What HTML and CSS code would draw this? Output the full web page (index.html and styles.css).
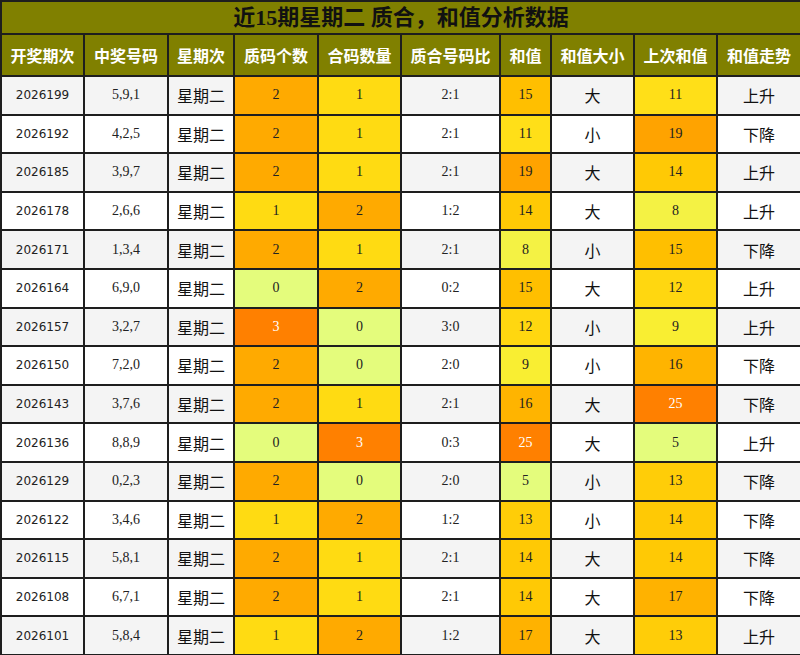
FILE: index.html
```html
<!DOCTYPE html>
<html lang="zh-CN">
<head>
<meta charset="utf-8">
<title>近15期星期二 质合，和值分析数据</title>
<link rel="stylesheet" href="styles.css">
</head>
<body>
<table class="grid">
  <colgroup>
    <col class="w83"><col class="w84"><col class="w66"><col class="w84"><col class="w83">
    <col class="w99"><col class="w51"><col class="w83"><col class="w83"><col class="w84">
  </colgroup>
  <thead>
    <tr class="title-row"><th colspan="10" class="title">近15期星期二 质合，和值分析数据</th></tr>
    <tr class="head-row">
      <th>开奖期次</th><th>中奖号码</th><th>星期次</th><th>质码个数</th><th>合码数量</th>
      <th>质合号码比</th><th>和值</th><th>和值大小</th><th>上次和值</th><th>和值走势</th>
    </tr>
  </thead>
  <tbody>
    <tr class="odd"><td class="period">2026199</td><td class="num">5,9,1</td><td class="cn">星期二</td><td class="num q2">2</td><td class="num q1">1</td><td class="num">2:1</td><td class="num s15">15</td><td class="cn">大</td><td class="num s11">11</td><td class="cn">上升</td></tr>
    <tr><td class="period">2026192</td><td class="num">4,2,5</td><td class="cn">星期二</td><td class="num q2">2</td><td class="num q1">1</td><td class="num">2:1</td><td class="num s11">11</td><td class="cn">小</td><td class="num s19">19</td><td class="cn">下降</td></tr>
    <tr class="odd"><td class="period">2026185</td><td class="num">3,9,7</td><td class="cn">星期二</td><td class="num q2">2</td><td class="num q1">1</td><td class="num">2:1</td><td class="num s19">19</td><td class="cn">大</td><td class="num s14">14</td><td class="cn">上升</td></tr>
    <tr><td class="period">2026178</td><td class="num">2,6,6</td><td class="cn">星期二</td><td class="num q1">1</td><td class="num q2">2</td><td class="num">1:2</td><td class="num s14">14</td><td class="cn">大</td><td class="num s8">8</td><td class="cn">上升</td></tr>
    <tr class="odd"><td class="period">2026171</td><td class="num">1,3,4</td><td class="cn">星期二</td><td class="num q2">2</td><td class="num q1">1</td><td class="num">2:1</td><td class="num s8">8</td><td class="cn">小</td><td class="num s15">15</td><td class="cn">下降</td></tr>
    <tr><td class="period">2026164</td><td class="num">6,9,0</td><td class="cn">星期二</td><td class="num q0">0</td><td class="num q2">2</td><td class="num">0:2</td><td class="num s15">15</td><td class="cn">大</td><td class="num s12">12</td><td class="cn">上升</td></tr>
    <tr class="odd"><td class="period">2026157</td><td class="num">3,2,7</td><td class="cn">星期二</td><td class="num q3">3</td><td class="num q0">0</td><td class="num">3:0</td><td class="num s12">12</td><td class="cn">小</td><td class="num s9">9</td><td class="cn">上升</td></tr>
    <tr><td class="period">2026150</td><td class="num">7,2,0</td><td class="cn">星期二</td><td class="num q2">2</td><td class="num q0">0</td><td class="num">2:0</td><td class="num s9">9</td><td class="cn">小</td><td class="num s16">16</td><td class="cn">下降</td></tr>
    <tr class="odd"><td class="period">2026143</td><td class="num">3,7,6</td><td class="cn">星期二</td><td class="num q2">2</td><td class="num q1">1</td><td class="num">2:1</td><td class="num s16">16</td><td class="cn">大</td><td class="num s25">25</td><td class="cn">下降</td></tr>
    <tr><td class="period">2026136</td><td class="num">8,8,9</td><td class="cn">星期二</td><td class="num q0">0</td><td class="num q3">3</td><td class="num">0:3</td><td class="num s25">25</td><td class="cn">大</td><td class="num s5">5</td><td class="cn">上升</td></tr>
    <tr class="odd"><td class="period">2026129</td><td class="num">0,2,3</td><td class="cn">星期二</td><td class="num q2">2</td><td class="num q0">0</td><td class="num">2:0</td><td class="num s5">5</td><td class="cn">小</td><td class="num s13">13</td><td class="cn">下降</td></tr>
    <tr><td class="period">2026122</td><td class="num">3,4,6</td><td class="cn">星期二</td><td class="num q1">1</td><td class="num q2">2</td><td class="num">1:2</td><td class="num s13">13</td><td class="cn">小</td><td class="num s14">14</td><td class="cn">下降</td></tr>
    <tr class="odd"><td class="period">2026115</td><td class="num">5,8,1</td><td class="cn">星期二</td><td class="num q2">2</td><td class="num q1">1</td><td class="num">2:1</td><td class="num s14">14</td><td class="cn">大</td><td class="num s14">14</td><td class="cn">下降</td></tr>
    <tr><td class="period">2026108</td><td class="num">6,7,1</td><td class="cn">星期二</td><td class="num q2">2</td><td class="num q1">1</td><td class="num">2:1</td><td class="num s14">14</td><td class="cn">大</td><td class="num s17">17</td><td class="cn">下降</td></tr>
    <tr class="odd"><td class="period">2026101</td><td class="num">5,8,4</td><td class="cn">星期二</td><td class="num q1">1</td><td class="num q2">2</td><td class="num">1:2</td><td class="num s17">17</td><td class="cn">大</td><td class="num s13">13</td><td class="cn">上升</td></tr>
  </tbody>
</table>
</body>
</html>
```

FILE: styles.css
```css
html, body {
  margin: 0;
  padding: 0;
  background: #ffffff;
}

.grid {
  width: 800px;
  table-layout: fixed;
  border-collapse: collapse;
  font-family: "Liberation Serif", "Noto Sans CJK SC", serif;
  color: #222;
}

.w83 { width: 83px; }
.w84 { width: 84px; }
.w66 { width: 66px; }
.w99 { width: 99px; }
.w51 { width: 51px; }

.grid th,
.grid td {
  border: 2px solid #1e1e1e;
  padding: 0;
  text-align: center;
  vertical-align: middle;
}

.title-row { height: 33px; }
.title {
  background: #808000;
  color: #111;
  font-size: 22px;
  font-weight: bold;
  line-height: 28px;
}

.head-row { height: 42px; }
.head-row th {
  background: #808000;
  color: #ffffff;
  font-family: "Noto Sans CJK SC", sans-serif;
  font-size: 16px;
  font-weight: bold;
}

.grid tbody tr { height: 38.6px; background: #ffffff; }
.grid tbody tr.odd { background: #f4f4f4; }

.period {
  font-family: "DejaVu Sans", sans-serif;
  font-size: 12px;
  color: #222;
}
.num {
  font-size: 14px;
  color: #222;
}
.cn {
  font-family: "Noto Sans CJK SC", sans-serif;
  font-size: 16px;
  color: #111;
}

/* prime / composite counts */
.q0 { background: #e4fc7c; }
.q1 { background: #ffdb12; }
.q2 { background: #ffaa00; }
.q3 { background: #ff8000; color: #fff; }

/* sum values */
.s5  { background: #e4fc7c; }
.s8  { background: #f4f244; }
.s9  { background: #f9ee32; }
.s11 { background: #ffdf18; }
.s12 { background: #ffd710; }
.s13 { background: #ffcd08; }
.s14 { background: #ffc905; }
.s15 { background: #ffbf00; }
.s16 { background: #ffb400; }
.s17 { background: #ffb200; }
.s19 { background: #ffa300; }
.s25 { background: #ff8000; color: #fff; }
```
